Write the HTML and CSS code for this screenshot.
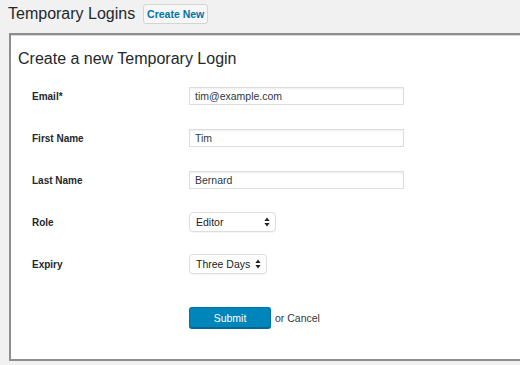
FILE: index.html
```html
<!DOCTYPE html>
<html lang="en">
<head>
    <meta charset="UTF-8">
    <meta name="viewport" content="width=device-width, initial-scale=1.0">
    <title>Temporary Logins</title>
    <link rel="stylesheet" href="styles.css">
</head>
<body>
    <div class="page-head">
        <h1>Temporary Logins</h1>
        <a class="add-new" href="#">Create New</a>
    </div>

    <div class="panel">
        <h2>Create a new Temporary Login</h2>

        <form class="form-grid">
            <label class="field-label" for="email">Email*</label>
            <div class="field"><input class="text-input" id="email" type="text" value="tim@example.com"></div>

            <label class="field-label" for="first">First Name</label>
            <div class="field"><input class="text-input" id="first" type="text" value="Tim"></div>

            <label class="field-label" for="last">Last Name</label>
            <div class="field"><input class="text-input" id="last" type="text" value="Bernard"></div>

            <label class="field-label" for="role">Role</label>
            <div class="field">
                <div class="select-wrap role">
                    <select id="role"><option>Editor</option></select>
                    <svg class="arrows" width="6" height="10" viewBox="0 0 6 10"><path d="M3 0.5L5.6 4H0.4z M3 9.5L0.4 6H5.6z" fill="#222"/></svg>
                </div>
            </div>

            <label class="field-label" for="expiry">Expiry</label>
            <div class="field">
                <div class="select-wrap expiry">
                    <select id="expiry"><option>Three Days</option></select>
                    <svg class="arrows" width="6" height="10" viewBox="0 0 6 10"><path d="M3 0.5L5.6 4H0.4z M3 9.5L0.4 6H5.6z" fill="#222"/></svg>
                </div>
            </div>

            <div class="actions">
                <button class="submit-btn" type="button">Submit</button>
                <span class="cancel">or <a href="#">Cancel</a></span>
            </div>
        </form>
    </div>
</body>
</html>
```

FILE: styles.css
```css
* {
    margin: 0;
    padding: 0;
    box-sizing: border-box;
}

body {
    background: #f1f1f1;
    color: #23282d;
    font-family: 'Liberation Sans', Arial, sans-serif;
    width: 520px;
    height: 365px;
    overflow: hidden;
}

.page-head {
    display: flex;
    align-items: center;
    padding: 3px 0 0 8px;
    height: 24px;
}

.page-head h1 {
    font-size: 16px;
    font-weight: 400;
    line-height: 20px;
}

.add-new {
    margin-left: 8px;
    display: inline-block;
    height: 20px;
    width: 65px;
    line-height: 18px;
    text-align: center;
    font-size: 10.5px;
    font-weight: 700;
    color: #0073aa;
    text-decoration: none;
    background: #f7f7f7;
    border: 1px solid #d4d4d4;
    border-radius: 3px;
}

.panel {
    margin: 9px 0 0 9px;
    width: 511px;
    height: 328px;
    background: #fff;
    border: 2px solid #8e8e8e;
    border-right: none;
    box-shadow: inset 0 1px 0 #d8d8d8;
    padding: 14px 0 0 7px;
}

.panel h2 {
    font-size: 16px;
    font-weight: 400;
    line-height: 20px;
    color: #23282d;
}

.form-grid {
    display: grid;
    grid-template-columns: 157px 1fr;
    grid-auto-rows: 42px;
    align-items: center;
    margin-top: 6px;
    padding-left: 14px;
}

.field-label {
    font-size: 10px;
    font-weight: 700;
    color: #23282d;
}

.text-input {
    display: block;
    width: 215px;
    height: 18px;
    border: 1px solid #ddd;
    box-shadow: inset 0 1px 2px rgba(0, 0, 0, 0.07);
    padding: 0 5px;
    font-family: inherit;
    font-size: 10.5px;
    color: #32373c;
    outline: none;
}

.select-wrap {
    position: relative;
    height: 20px;
}

.select-wrap.role {
    width: 87px;
}

.select-wrap.expiry {
    width: 78px;
}

.select-wrap select {
    appearance: none;
    -webkit-appearance: none;
    width: 100%;
    height: 20px;
    border: 1px solid #ddd;
    border-radius: 4px;
    background: #fff;
    box-shadow: 0 1px 1px rgba(0, 0, 0, 0.04);
    padding: 0 14px 0 6px;
    font-family: inherit;
    font-size: 10.5px;
    color: #222;
    outline: none;
}

.arrows {
    position: absolute;
    right: 6px;
    top: 5px;
}

.actions {
    grid-column: 2;
    display: flex;
    align-items: center;
    margin-top: 23px;
}

.submit-btn {
    width: 82px;
    height: 21px;
    background: #0085ba;
    border: 1px solid #0073aa;
    border-bottom-color: #006799;
    border-radius: 3px;
    box-shadow: 0 1px 0 #006799;
    color: #fff;
    font-family: inherit;
    font-size: 10.5px;
}

.cancel {
    margin-left: 4px;
    font-size: 10.5px;
    color: #32373c;
}

.cancel a {
    color: #32373c;
    text-decoration: none;
}
```
